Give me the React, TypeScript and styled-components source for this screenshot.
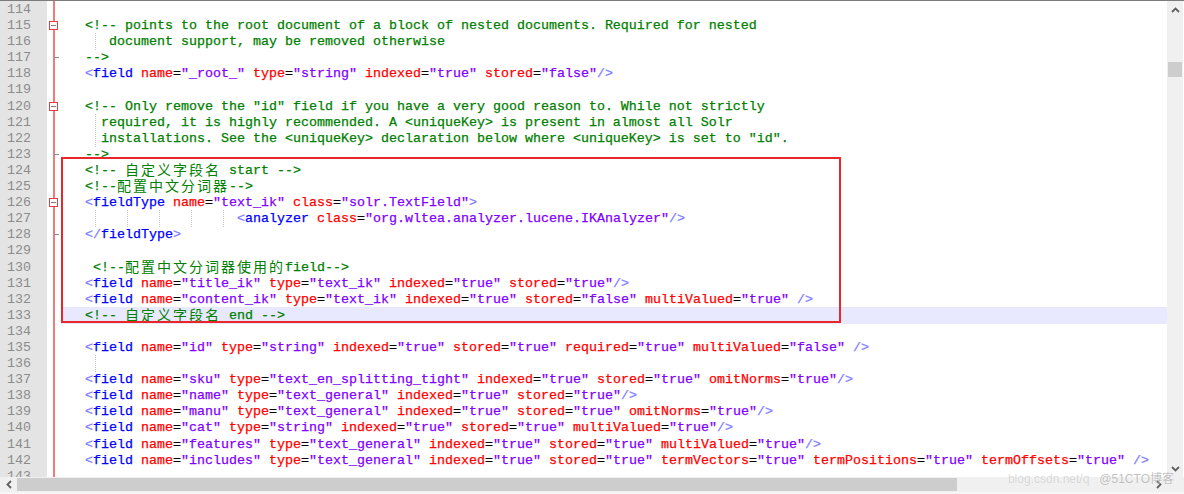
import React from "react";
import styled, { createGlobalStyle } from "styled-components";

const LINE_H = 16.1;

const GlobalStyle = createGlobalStyle`
  html, body {
    margin: 0;
    padding: 0;
    background: #ffffff;
    overflow: hidden;
  }
`;

type Line = {
  n: number;
  text: string;
  comment?: boolean;
  guides?: number[];
  fold?: "open" | "end";
  current?: boolean;
};

const lines: Line[] = [
  { n: 114, text: "" },
  { n: 115, text: "   <!-- points to the root document of a block of nested documents. Required for nested", comment: true, fold: "open" },
  { n: 116, text: "      document support, may be removed otherwise", comment: true, guides: [34] },
  { n: 117, text: "   -->", comment: true, fold: "end" },
  { n: 118, text: '   <field name="_root_" type="string" indexed="true" stored="false"/>' },
  { n: 119, text: "" },
  { n: 120, text: '   <!-- Only remove the "id" field if you have a very good reason to. While not strictly', comment: true, fold: "open" },
  { n: 121, text: "     required, it is highly recommended. A <uniqueKey> is present in almost all Solr", comment: true, guides: [34] },
  { n: 122, text: '     installations. See the <uniqueKey> declaration below where <uniqueKey> is set to "id".', comment: true, guides: [34] },
  { n: 123, text: "   -->", comment: true, fold: "end" },
  { n: 124, text: "   <!-- 自定义字段名 start -->", comment: true },
  { n: 125, text: "   <!--配置中文分词器-->", comment: true },
  { n: 126, text: '   <fieldType name="text_ik" class="solr.TextField">', fold: "open" },
  { n: 127, text: '                      <analyzer class="org.wltea.analyzer.lucene.IKAnalyzer"/>', guides: [34, 66, 98, 130, 162] },
  { n: 128, text: "   </fieldType>", fold: "end" },
  { n: 129, text: "" },
  { n: 130, text: "    <!--配置中文分词器使用的field-->", comment: true },
  { n: 131, text: '   <field name="title_ik" type="text_ik" indexed="true" stored="true"/>' },
  { n: 132, text: '   <field name="content_ik" type="text_ik" indexed="true" stored="false" multiValued="true" />' },
  { n: 133, text: "   <!-- 自定义字段名 end -->", comment: true, current: true },
  { n: 134, text: "" },
  { n: 135, text: '   <field name="id" type="string" indexed="true" stored="true" required="true" multiValued="false" />' },
  { n: 136, text: "", guides: [34] },
  { n: 137, text: '   <field name="sku" type="text_en_splitting_tight" indexed="true" stored="true" omitNorms="true"/>' },
  { n: 138, text: '   <field name="name" type="text_general" indexed="true" stored="true"/>' },
  { n: 139, text: '   <field name="manu" type="text_general" indexed="true" stored="true" omitNorms="true"/>' },
  { n: 140, text: '   <field name="cat" type="string" indexed="true" stored="true" multiValued="true"/>' },
  { n: 141, text: '   <field name="features" type="text_general" indexed="true" stored="true" multiValued="true"/>' },
  { n: 142, text: '   <field name="includes" type="text_general" indexed="true" stored="true" termVectors="true" termPositions="true" termOffsets="true" />' },
  { n: 143, text: "" },
];

type Kind = "plain" | "bracket" | "tag" | "attr" | "eq" | "value" | "comment";
type Token = { t: string; k: Kind };

const tokenize = (src: string): Token[] => {
  const out: Token[] = [];
  let s = src;
  const lead = s.match(/^\s*/)![0];
  if (lead) out.push({ t: lead, k: "plain" });
  s = s.slice(lead.length);
  const open = s.match(/^(<\/?)(\w+)/);
  if (!open) return [{ t: src, k: "plain" }];
  out.push({ t: open[1], k: "bracket" }, { t: open[2], k: "tag" });
  s = s.slice(open[0].length);
  let m: RegExpMatchArray | null;
  while ((m = s.match(/^(\s+)(\w+)(=)("[^"]*")/))) {
    out.push({ t: m[1], k: "plain" }, { t: m[2], k: "attr" }, { t: m[3], k: "eq" }, { t: m[4], k: "value" });
    s = s.slice(m[0].length);
  }
  const end = s.match(/^(\s*)(\/?>)/);
  if (end) {
    out.push({ t: end[1], k: "plain" }, { t: end[2], k: "bracket" });
    s = s.slice(end[0].length);
  }
  if (s) out.push({ t: s, k: "plain" });
  return out;
};

const colors: Record<Kind, string> = {
  plain: "#000000",
  bracket: "#8080ff",
  tag: "#0000ff",
  attr: "#ff0000",
  eq: "#000000",
  value: "#8000ff",
  comment: "#008000",
};

// CJK runs are two columns wide in the editor
const withCjk = (text: string) =>
  text.split(/([\u4e00-\u9fff]+)/).map((part, i) =>
    /[\u4e00-\u9fff]/.test(part) ? <Cjk key={i}>{part}</Cjk> : part
  );

const App: React.FC = () => {
  return (
    <>
      <GlobalStyle />
      <Window>
        <Main>
          <Editor>
            {lines.map((line) => (
              <Row key={line.n}>
                <LineNo>{line.n}</LineNo>
                <FoldCell>
                  {line.fold === "open" && <FoldBox />}
                  {line.fold === "end" && <FoldTick />}
                </FoldCell>
                <Code $current={line.current}>
                  {line.guides?.map((g) => (
                    <Guide key={g} style={{ left: g }} />
                  ))}
                  {line.comment ? (
                    <Tok $k="comment">{withCjk(line.text)}</Tok>
                  ) : (
                    tokenize(line.text).map((tk, i) => (
                      <Tok key={i} $k={tk.k}>
                        {tk.t}
                      </Tok>
                    ))
                  )}
                </Code>
              </Row>
            ))}
            <Highlight />
          </Editor>
          <VScroll>
            <Arrow>
              <svg width="9" height="6" viewBox="0 0 9 6">
                <polyline points="1,5 4.5,1.5 8,5" fill="none" stroke="#606060" strokeWidth="1.8" />
              </svg>
            </Arrow>
            <VTrack>
              <VThumb />
            </VTrack>
            <Arrow>
              <svg width="9" height="6" viewBox="0 0 9 6">
                <polyline points="1,1 4.5,4.5 8,1" fill="none" stroke="#606060" strokeWidth="1.8" />
              </svg>
            </Arrow>
          </VScroll>
        </Main>
        <HScrollRow>
          <HScroll>
            <HArrow>
              <svg width="6" height="9" viewBox="0 0 6 9">
                <polyline points="5,1 1.5,4.5 5,8" fill="none" stroke="#606060" strokeWidth="1.8" />
              </svg>
            </HArrow>
            <HTrack>
              <HThumb />
            </HTrack>
            <HArrow>
              <svg width="6" height="9" viewBox="0 0 6 9">
                <polyline points="1,1 4.5,4.5 1,8" fill="none" stroke="#606060" strokeWidth="1.8" />
              </svg>
            </HArrow>
          </HScroll>
          <Corner />
        </HScrollRow>
        <Watermark>
          <span className="faint">blog.csdn.net/q</span>
          <span>@51CTO博客</span>
        </Watermark>
      </Window>
    </>
  );
};

export default App;

const Window = styled.div`
  position: relative;
  width: 1184px;
  height: 494px;
  box-sizing: border-box;
  border-top: 1px solid #7c7c7c;
  background: #ffffff;
  display: flex;
  flex-direction: column;
  overflow: hidden;
`;

const Main = styled.div`
  display: flex;
  height: 476px;
`;

const Editor = styled.div`
  position: relative;
  flex: 1;
  overflow: hidden;
  font-family: "Liberation Mono", "Noto Sans CJK SC", monospace;
  font-size: 13.33px;
`;

const Row = styled.div`
  display: grid;
  grid-template-columns: 47px 14px 1fr;
  height: ${LINE_H}px;
  line-height: ${LINE_H}px;
`;

const LineNo = styled.div`
  background: #e4e4e4;
  color: #8c8c8c;
  text-align: right;
  padding-right: 16px;
  padding-top: 1px;
  box-sizing: border-box;
`;

const FoldCell = styled.div`
  position: relative;
  background: linear-gradient(
    to right,
    #ffffff 0 6px,
    #f27a7a 6px 8px,
    #ffffff 8px 100%
  );
`;

const FoldBox = styled.div`
  position: absolute;
  left: 2px;
  top: 4px;
  width: 9px;
  height: 9px;
  box-sizing: border-box;
  border: 1px solid #ee3a3a;
  background: #ffffff;

  &::after {
    content: "";
    position: absolute;
    left: 1px;
    right: 1px;
    top: 3px;
    height: 1px;
    background: #808080;
  }
`;

const FoldTick = styled.div`
  position: absolute;
  left: 7px;
  top: 8px;
  width: 5px;
  height: 1px;
  background: #8a8a8a;
`;

const Code = styled.div<{ $current?: boolean }>`
  position: relative;
  white-space: pre;
  padding-top: 1px;
  box-sizing: border-box;
  -webkit-text-stroke: 0.25px currentColor;
  background: ${(p) => (p.$current ? "#e8e8ff" : "transparent")};
`;

const Guide = styled.span`
  position: absolute;
  top: 0;
  bottom: 0;
  width: 0;
  border-left: 1px dotted #c4c4c4;
`;

const Tok = styled.span<{ $k: Kind }>`
  color: ${(p) => colors[p.$k]};
`;

const Cjk = styled.span`
  position: relative;
  top: 1px;
  font-family: "Noto Sans CJK SC", sans-serif;
  font-size: 14px;
  line-height: 0;
  letter-spacing: 2px;
  -webkit-text-stroke: 0;
`;

const Highlight = styled.div`
  position: absolute;
  left: 61px;
  top: 156px;
  width: 780px;
  height: 166px;
  box-sizing: border-box;
  border: 2px solid #e8262b;
  pointer-events: none;
`;

const VScroll = styled.div`
  width: 16px;
  margin-right: 1px;
  background: #f0f0f0;
  display: flex;
  flex-direction: column;
`;

const Arrow = styled.div`
  height: 17px;
  display: flex;
  align-items: center;
  justify-content: center;
`;

const VTrack = styled.div`
  flex: 1;
  padding: 44px 1px 0;
`;

const VThumb = styled.div`
  height: 15px;
  background: #cdcdcd;
`;

const HScrollRow = styled.div`
  display: flex;
  height: 15px;
  border-bottom: 2px solid #f6f6f6;
`;

const HScroll = styled.div`
  flex: 1;
  display: flex;
  background: #f0f0f0;
`;

const HArrow = styled.div`
  width: 17px;
  display: flex;
  align-items: center;
  justify-content: center;
`;

const HTrack = styled.div`
  flex: 1;
  padding: 1px 0;
  display: flex;
`;

const HThumb = styled.div`
  width: 940px;
  background: #cdcdcd;
`;

const Corner = styled.div`
  width: 17px;
  background: #f0f0f0;
`;

const Watermark = styled.div`
  position: absolute;
  right: 10px;
  bottom: 9px;
  font-family: "Liberation Sans", "Noto Sans CJK SC", sans-serif;
  font-size: 12px;
  line-height: 12px;
  color: rgba(150, 150, 150, 0.6);
  text-shadow: 0 0 1px rgba(255, 255, 255, 0.8);
  pointer-events: none;
  display: flex;
  gap: 10px;

  .faint {
    color: rgba(170, 170, 170, 0.45);
  }
`;
